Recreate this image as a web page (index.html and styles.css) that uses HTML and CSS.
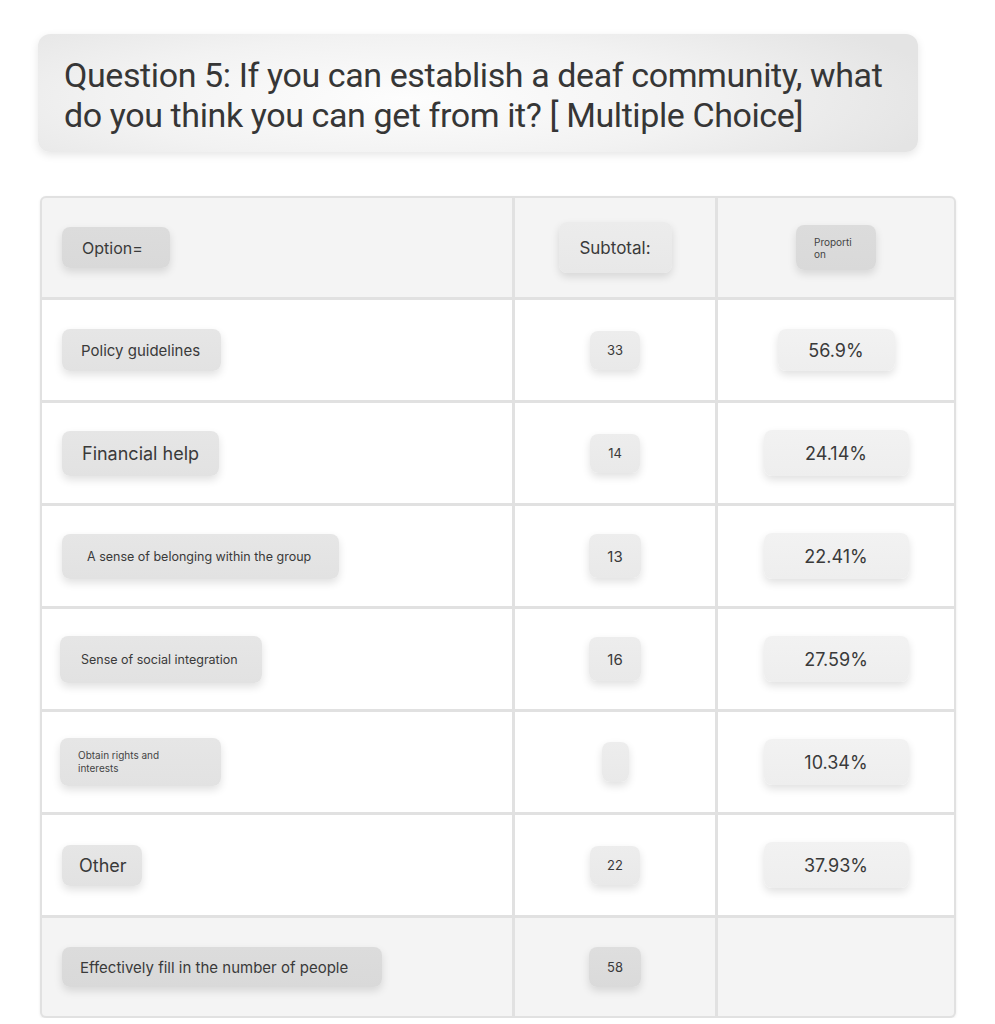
FILE: index.html
```html
<!DOCTYPE html>
<html lang="en">
<head>
<meta charset="utf-8">
<title>Question 5</title>
<link rel="stylesheet" href="styles.css">
</head>
<body>
<main class="page">
  <section class="question">
    <h1 class="question-text">Question 5: If you can establish a deaf community, what do you think you can get from it? [ Multiple Choice]</h1>
  </section>

  <section class="table">
    <div class="cell head c1"><span class="pill dark p-option">Option=</span></div>
    <div class="cell head c2"><span class="pill light p-subtotal">Subtotal:</span></div>
    <div class="cell head c3"><span class="pill dark p-prop">Proporti<br>on</span></div>

    <div class="cell c1"><span class="pill p-policy">Policy guidelines</span></div>
    <div class="cell c2"><span class="pill num">33</span></div>
    <div class="cell c3"><span class="pill pct p-pct-s">56.9%</span></div>

    <div class="cell c1"><span class="pill p-financial">Financial help</span></div>
    <div class="cell c2"><span class="pill num">14</span></div>
    <div class="cell c3"><span class="pill pct">24.14%</span></div>

    <div class="cell c1"><span class="pill p-belonging">A sense of belonging within the group</span></div>
    <div class="cell c2"><span class="pill num num-l">13</span></div>
    <div class="cell c3"><span class="pill pct">22.41%</span></div>

    <div class="cell c1"><span class="pill p-social">Sense of social integration</span></div>
    <div class="cell c2"><span class="pill num num-l">16</span></div>
    <div class="cell c3"><span class="pill pct">27.59%</span></div>

    <div class="cell c1"><span class="pill p-rights"><span class="rights-text">Obtain rights and interests</span></span></div>
    <div class="cell c2"><span class="pill num num-empty"></span></div>
    <div class="cell c3"><span class="pill pct">10.34%</span></div>

    <div class="cell c1"><span class="pill p-other">Other</span></div>
    <div class="cell c2"><span class="pill num">22</span></div>
    <div class="cell c3"><span class="pill pct">37.93%</span></div>

    <div class="cell foot c1"><span class="pill dark p-effective">Effectively fill in the number of people</span></div>
    <div class="cell foot c2"><span class="pill dark num">58</span></div>
    <div class="cell foot c3"></div>
  </section>
</main>
</body>
</html>
```

FILE: styles.css
```css
* { box-sizing: border-box; }

html, body {
  margin: 0;
  padding: 0;
  background: #ffffff;
}

body {
  font-family: Inter, "Noto Sans", "Liberation Sans", sans-serif;
  color: #3a3a3a;
}

.page {
  padding: 34px 0 0 38px;
  width: 995px;
}

.question {
  width: 880px;
  height: 118px;
  border-radius: 12px;
  background: radial-gradient(ellipse 62% 95% at 42% 55%, #fdfdfd 0%, #f2f2f2 55%, #e4e4e4 100%);
  box-shadow: 0 3px 8px rgba(0, 0, 0, 0.10);
  padding: 21px 20px 0 26px;
}

.question-text {
  margin: 0;
  width: 830px;
  font-family: Roboto, "Liberation Sans", sans-serif;
  font-weight: 400;
  font-size: 34px;
  line-height: 40px;
  color: #363636;
  letter-spacing: -0.4px;
}

.table {
  margin: 44px 0 0 2px;
  width: 916px;
  display: grid;
  grid-template-columns: 470px 200px 236px;
  grid-template-rows: 99px repeat(6, 100px) 98px;
  gap: 3px;
  padding: 2px;
  background: #e1e1e1;
  border-radius: 6px;
  box-shadow: 0 1px 3px rgba(0, 0, 0, 0.08);
}

.cell {
  background: #ffffff;
  display: flex;
  align-items: center;
}

.cell.head, .cell.foot { background: #f4f4f4; }
.cell.head.c1 { border-top-left-radius: 4px; }
.cell.head.c3 { border-top-right-radius: 4px; }
.cell.foot.c1 { border-bottom-left-radius: 4px; }
.cell.foot.c3 { border-bottom-right-radius: 4px; }

.c1 { padding-left: 20px; }
.c2, .c3 { justify-content: center; }

.pill {
  display: inline-flex;
  align-items: center;
  border-radius: 8px;
  background: linear-gradient(180deg, #e6e6e6 0%, #e2e2e2 100%);
  box-shadow: 0 4px 9px rgba(0, 0, 0, 0.12);
  color: #3a3a3a;
  white-space: nowrap;
}

.pill.dark { background: linear-gradient(180deg, #dcdcdc 0%, #d9d9d9 100%); }
.pill.light { background: linear-gradient(180deg, #ececec 0%, #e8e8e8 100%); }

.p-option { width: 108px; height: 41px; font-size: 16px; padding-left: 20px; }
.p-subtotal { width: 113px; height: 51px; font-size: 17px; justify-content: center; }
.p-prop {
  width: 80px; height: 45px;
  font-size: 10px; line-height: 12px;
  padding-left: 18px;
  white-space: normal;
  color: #444444;
}

.p-policy { width: 159px; height: 42px; font-size: 15px; padding-left: 19px; }
.p-financial { width: 157px; height: 45px; font-size: 18px; padding-left: 20px; }
.p-belonging { width: 277px; height: 45px; font-size: 12.5px; padding-left: 25px; }
.p-social { width: 202px; height: 47px; font-size: 12.5px; padding-left: 21px; margin-left: -2px; }
.p-rights { width: 161px; height: 48px; padding-left: 18px; margin-left: -2px; }
.rights-text {
  white-space: normal;
  width: 92px;
  font-size: 10px;
  line-height: 13px;
  color: #444444;
}
.p-other { width: 80px; height: 41px; font-size: 18px; padding-left: 17px; }
.p-effective { width: 320px; height: 40px; font-size: 15px; padding-left: 18px; }

.num {
  width: 50px;
  height: 39px;
  justify-content: center;
  font-size: 13px;
  background: linear-gradient(180deg, #ededed 0%, #e9e9e9 100%);
}
.num-l { width: 52px; height: 44px; font-size: 15px; }
.num-empty { width: 27px; height: 40px; }
.num.dark { width: 52px; height: 40px; background: linear-gradient(180deg, #dedede 0%, #dadada 100%); }

.pct {
  width: 145px;
  height: 46px;
  justify-content: center;
  font-size: 18px;
  background: linear-gradient(180deg, #f2f2f2 0%, #eeeeee 100%);
}
.p-pct-s { width: 117px; height: 42px; }
```
